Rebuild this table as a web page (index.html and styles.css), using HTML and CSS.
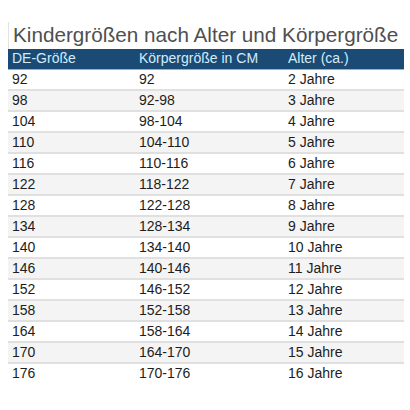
FILE: index.html
```html
<html>

<head>
    <link rel="stylesheet" href="styles.css">
</head>

<body>
    <div class="chart">
        <h1>Kindergrößen nach Alter und Körpergröße</h1>
        <table>
            <thead>
                <tr>
                    <th class="c1">DE-Größe</th>
                    <th class="c2">Körpergröße in CM</th>
                    <th class="c3">Alter (ca.)</th>
                </tr>
            </thead>
            <tbody>
                <tr><td>92</td><td>92</td><td>2 Jahre</td></tr>
                <tr><td>98</td><td>92-98</td><td>3 Jahre</td></tr>
                <tr><td>104</td><td>98-104</td><td>4 Jahre</td></tr>
                <tr><td>110</td><td>104-110</td><td>5 Jahre</td></tr>
                <tr><td>116</td><td>110-116</td><td>6 Jahre</td></tr>
                <tr><td>122</td><td>118-122</td><td>7 Jahre</td></tr>
                <tr><td>128</td><td>122-128</td><td>8 Jahre</td></tr>
                <tr><td>134</td><td>128-134</td><td>9 Jahre</td></tr>
                <tr><td>140</td><td>134-140</td><td>10 Jahre</td></tr>
                <tr><td>146</td><td>140-146</td><td>11 Jahre</td></tr>
                <tr><td>152</td><td>146-152</td><td>12 Jahre</td></tr>
                <tr><td>158</td><td>152-158</td><td>13 Jahre</td></tr>
                <tr><td>164</td><td>158-164</td><td>14 Jahre</td></tr>
                <tr><td>170</td><td>164-170</td><td>15 Jahre</td></tr>
                <tr><td>176</td><td>170-176</td><td>16 Jahre</td></tr>
            </tbody>
        </table>
    </div>
</body>

</html>
```

FILE: styles.css
```css
body {
    background: #fff;
    margin: 0;
    font-family: 'Liberation Sans', Arial, sans-serif;
}

.chart {
    width: 396px;
    margin: 22px 0 0 8px;
}

h1 {
    margin: 0;
    height: 27px;
    padding-left: 4px;
    border-left: 1px solid #e2e2e2;
    font-size: 20.7px;
    font-weight: normal;
    line-height: 25px;
    white-space: nowrap;
    color: #4f4f4f;
}

table {
    width: 100%;
    border-collapse: collapse;
    font-size: 14px;
}

th {
    background: #1b4b75;
    color: #d3ebfb;
    font-weight: normal;
    text-align: left;
    line-height: 19px;
    padding: 0 0 1px 4px;
    border-bottom: 1px solid #8fb3cc;
}

.c1 {
    width: 123px;
}

.c2 {
    width: 145px;
}

td {
    color: #1d1d1d;
    line-height: 19px;
    padding: 0 0 0 4px;
    border-bottom: 2px solid #e0e0e0;
}

tbody tr:nth-child(even) td {
    background: #f4f4f4;
}

tbody tr:last-child td {
    border-bottom: none;
}
```
